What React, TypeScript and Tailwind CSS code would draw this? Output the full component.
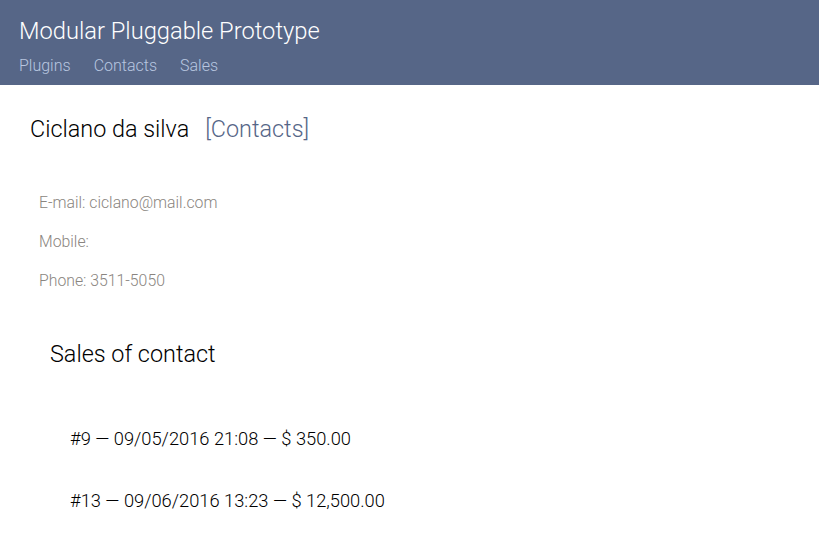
import React from "react";

export default function App() {
  return (
    <div className="min-h-[534px] bg-white font-['Roboto',sans-serif] font-light">
      <header className="h-[85px] bg-[#566687] px-[19px] pt-[15px]">
        <h1 className="text-[23.7px] leading-[32px] text-white">Modular Pluggable Prototype</h1>
        <nav className="mt-[9px] flex gap-[23px] text-[16px] leading-[20px] text-[#b8c6e0]">
          <a>Plugins</a>
          <a>Contacts</a>
          <a>Sales</a>
        </nav>
      </header>
      <main className="px-[30px] pt-[28px]">
        <h2 className="flex items-baseline gap-[16px] text-[23.4px] leading-[32px] text-black">
          <span>Ciclano da silva</span>
          <span className="text-[#566687]">[Contacts]</span>
        </h2>
        <div className="mt-[48px] flex flex-col gap-[19px] pl-[9px] text-[15.8px] leading-[20px] text-[#8a8580]">
          <p>E-mail: ciclano@mail.com</p>
          <p>Mobile:</p>
          <p>Phone: 3511-5050</p>
        </div>
        <h3 className="mt-[47px] pl-[20px] text-[23.4px] leading-[32px] text-black">Sales of contact</h3>
        <ul className="mt-[58px] flex flex-col gap-[40px] pl-[40px] text-[18.3px] leading-[22px] text-black">
          <li>#9 — 09/05/2016 21:08 — $ 350.00</li>
          <li>#13 — 09/06/2016 13:23 — $ 12,500.00</li>
        </ul>
      </main>
    </div>
  );
}
